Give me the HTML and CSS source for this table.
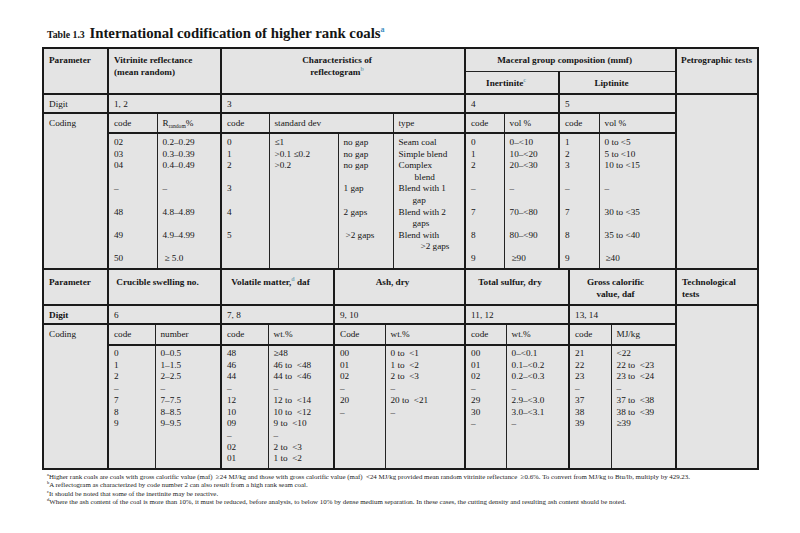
FILE: index.html
```html
<!DOCTYPE html>
<html>
<head>
<meta charset="utf-8">
<link rel="stylesheet" href="styles.css">
</head>
<body>
<div class="page">
  <div class="title"><span class="lbl">Table 1.3</span> International codification of higher rank coals<sup>a</sup></div>

  <table class="t top">
    <colgroup>
      <col style="width:65px"><col style="width:49px"><col style="width:64px"><col style="width:48px"><col style="width:69px"><col style="width:55px"><col style="width:72px"><col style="width:39px"><col style="width:55px"><col style="width:40px"><col style="width:77px"><col style="width:82px">
    </colgroup>
    <tr class="h1">
      <th rowspan="2">Parameter</th>
      <th colspan="2" rowspan="2" class="g">Vitrinite reflectance<br>(mean random)</th>
      <th colspan="4" rowspan="2" class="g c">Characteristics of<br>reflectogram<sup>b</sup></th>
      <th colspan="4" class="g c">Maceral group composition (mmf)</th>
      <th rowspan="2" class="g pt">Petrographic tests</th>
    </tr>
    <tr class="h2">
      <th colspan="2" class="g c">Inertinite<sup>c</sup></th>
      <th colspan="2" class="g c">Liptinite</th>
    </tr>
    <tr class="digit">
      <td>Digit</td>
      <td colspan="2" class="g">1, 2</td>
      <td colspan="4" class="g">3</td>
      <td colspan="2" class="g">4</td>
      <td colspan="2" class="g">5</td>
      <td rowspan="3" class="g"></td>
    </tr>
    <tr class="coding">
      <td rowspan="2" class="lbltop">Coding</td>
      <td class="g">code</td>
      <td>R<sub>random</sub>%</td>
      <td class="g">code</td>
      <td colspan="2">standard dev</td>
      <td>type</td>
      <td class="g">code</td>
      <td>vol %</td>
      <td class="g">code</td>
      <td>vol %</td>
    </tr>
    <tr class="data">
      <td class="g">02<br>03<br>04<br><br>–<br><br>48<br><br>49<br><br>50</td>
      <td>0.2–0.29<br>0.3–0.39<br>0.4–0.49<br><br>–<br><br>4.8–4.89<br><br>4.9–4.99<br><br><span class="s2">≥ 5.0</span></td>
      <td class="g">0<br>1<br>2<br><br>3<br><br>4<br><br>5</td>
      <td>≤1<br>&gt;0.1 ≤0.2<br>&gt;0.2</td>
      <td>no gap<br>no gap<br>no gap<br><br>1 gap<br><br>2 gaps<br><br><span class="s2">&gt;2 gaps</span></td>
      <td>Seam coal<br>Simple blend<br>Complex<br><span class="i1">blend</span><br>Blend with 1<br><span class="i2">gap</span><br>Blend with 2<br><span class="i2">gaps</span><br>Blend with<br><span class="i3">&gt;2 gaps</span></td>
      <td class="g">0<br>1<br>2<br><br>–<br><br>7<br><br>8<br><br>9</td>
      <td>0–&lt;10<br>10–&lt;20<br>20–&lt;30<br><br>–<br><br>70–&lt;80<br><br>80–&lt;90<br><br><span class="s2">≥90</span></td>
      <td class="g">1<br>2<br>3<br><br>–<br><br>7<br><br>8<br><br>9</td>
      <td>0 to &lt;5<br>5 to &lt;10<br>10 to &lt;15<br><br>–<br><br>30 to &lt;35<br><br>35 to &lt;40<br><br><span class="s1">≥40</span></td>
    </tr>
  </table>

  <table class="t bottom">
    <colgroup>
      <col style="width:65px"><col style="width:47px"><col style="width:66px"><col style="width:47px"><col style="width:66px"><col style="width:51px"><col style="width:80px"><col style="width:41px"><col style="width:63px"><col style="width:42px"><col style="width:65px"><col style="width:82px">
    </colgroup>
    <tr class="bh">
      <th>Parameter</th>
      <th colspan="2" class="g c2">Crucible swelling no.</th>
      <th colspan="2" class="g c2">Volatile matter,<sup>d</sup> daf</th>
      <th colspan="2" class="g c2">Ash, dry</th>
      <th colspan="2" class="g c2">Total sulfur, dry</th>
      <th colspan="2" class="g c2">Gross calorific<br>value, daf</th>
      <th class="g">Technological<br>tests</th>
    </tr>
    <tr class="digit d2">
      <td><b>Digit</b></td>
      <td colspan="2" class="g">6</td>
      <td colspan="2" class="g">7, 8</td>
      <td colspan="2" class="g">9, 10</td>
      <td colspan="2" class="g">11, 12</td>
      <td colspan="2" class="g">13, 14</td>
      <td rowspan="3" class="g"></td>
    </tr>
    <tr class="coding c21">
      <td rowspan="2" class="lbltop">Coding</td>
      <td class="g">code</td>
      <td>number</td>
      <td class="g">code</td>
      <td>wt.%</td>
      <td class="g">Code</td>
      <td>wt.%</td>
      <td class="g">code</td>
      <td>wt.%</td>
      <td class="g">code</td>
      <td>MJ/kg</td>
    </tr>
    <tr class="data bdata">
      <td class="g">0<br>1<br>2<br>–<br>7<br>8<br>9</td>
      <td>0–0.5<br>1–1.5<br>2–2.5<br>–<br>7–7.5<br>8–8.5<br>9–9.5</td>
      <td class="g">48<br>46<br>44<br>–<br>12<br>10<br>09<br>–<br>02<br>01</td>
      <td>≥48<br>46 to &nbsp;&lt;48<br>44 to &nbsp;&lt;46<br>–<br>12 to &nbsp;&lt;14<br>10 to &nbsp;&lt;12<br>9 to &nbsp;&lt;10<br>–<br>2 to &nbsp;&lt;3<br>1 to &nbsp;&lt;2</td>
      <td class="g">00<br>01<br>02<br>–<br>20<br>–</td>
      <td>0 to &nbsp;&lt;1<br>1 to &nbsp;&lt;2<br>2 to &nbsp;&lt;3<br>–<br>20 to &nbsp;&lt;21<br>–</td>
      <td class="g">00<br>01<br>02<br>–<br>29<br>30<br>–</td>
      <td>0–&lt;0.1<br>0.1–&lt;0.2<br>0.2–&lt;0.3<br>–<br>2.9–&lt;3.0<br>3.0–&lt;3.1<br>–</td>
      <td class="g">21<br>22<br>23<br>–<br>37<br>38<br>39</td>
      <td>&lt;22<br>22 to &nbsp;&lt;23<br>23 to &nbsp;&lt;24<br>–<br>37 to &nbsp;&lt;38<br>38 to &nbsp;&lt;39<br>≥39</td>
    </tr>
  </table>

  <div class="notes">
    <p><sup>a</sup>Higher rank coals are coals with gross calorific value (maf) &nbsp;≥24 MJ/kg and those with gross calorific value (maf) &nbsp;&lt;24 MJ/kg provided mean random vitrinite reflectance &nbsp;≥0.6%. To convert from MJ/kg to Btu/lb, multiply by 429.23.</p>
    <p><sup>b</sup>A reflectogram as characterized by code number 2 can also result from a high rank seam coal.</p>
    <p><sup>c</sup>It should be noted that some of the inertinite may be reactive.</p>
    <p><sup>d</sup>Where the ash content of the coal is more than 10%, it must be reduced, before analysis, to below 10% by dense medium separation. In these cases, the cutting density and resulting ash content should be noted.</p>
  </div>
</div>
</body>
</html>
```

FILE: styles.css
```css
* { box-sizing: border-box; }
body {
  margin: 0;
  background: #ffffff;
  font-family: "Liberation Serif", "Times New Roman", serif;
  color: #151515;
}
.page {
  padding: 24px 43px 0 42px;
}
.title {
  margin: 0 0 5px 5px;
  height: 18px;
  line-height: 18px;
  font-weight: bold;
  font-size: 14.8px;
  white-space: nowrap;
}
.title .lbl {
  font-size: 9.8px;
  margin-right: 1px;
}
.title sup {
  color: #3f8fc4;
  font-size: 8px;
  line-height: 0;
  vertical-align: 6px;
}
.t {
  border-collapse: collapse;
  table-layout: fixed;
  width: 715px;
  background: #e4e4e4;
  border: 2px solid #1a1a1a;
  font-size: 9.2px;
  line-height: 11.6px;
}
.t td, .t th {
  border: 1px solid #222;
  padding: 0 3px 0 5px;
  vertical-align: top;
  text-align: left;
  font-weight: normal;
  white-space: nowrap;
  overflow: hidden;
}
.t th { font-weight: bold; padding-top: 6px; }
.t .g { border-left: 2px solid #1a1a1a; }
.t .c { text-align: center; padding-left: 0; padding-right: 12px; }
.t .c2 { text-align: center; padding-left: 0; padding-right: 14px; }
.t .pt { padding-left: 4px; padding-right: 0; }
.t sup {
  font-size: 6px;
  line-height: 0;
  vertical-align: 4px;
  color: #7fa9b8;
  font-weight: bold;
}
.t sub {
  font-size: 5.6px;
  line-height: 0;
  vertical-align: -1.5px;
}
.h1 { height: 23px; }
.h2 { height: 23px; }
.digit { height: 19px; }
.digit td { border-top: 2px solid #1a1a1a; padding-top: 4px; }
.coding { height: 20px; }
.coding td { border-top: 2px solid #1a1a1a; padding-top: 4px; }
.coding td.lbltop { padding-top: 4px; }
.data { height: 136px; }
.data td { border-top: 2px solid #1a1a1a; padding-top: 3px; }
.i1 { padding-left: 16px; }
.i2 { padding-left: 14px; }
.i3 { padding-left: 22px; }
.s1 { padding-left: 1px; }
.s2 { padding-left: 2px; }

.top { border-bottom: 2px solid #1a1a1a; }
.bottom { border-top: 0; }
.bh { height: 35px; }
.bh th { border-top: 0; padding-top: 7px; }
.d2 { height: 19px; }
.c21 { height: 21px; }
.bdata { height: 124px; }
.bdata td { padding-top: 2px; line-height: 11.7px; }

.notes {
  margin: 3px 0 0 5px;
  font-size: 6.9px;
  line-height: 8.4px;
  color: #222;
}
.notes p { margin: 0; white-space: nowrap; }
.notes sup {
  font-size: 4.5px;
  line-height: 0;
  vertical-align: 3px;
}
```
